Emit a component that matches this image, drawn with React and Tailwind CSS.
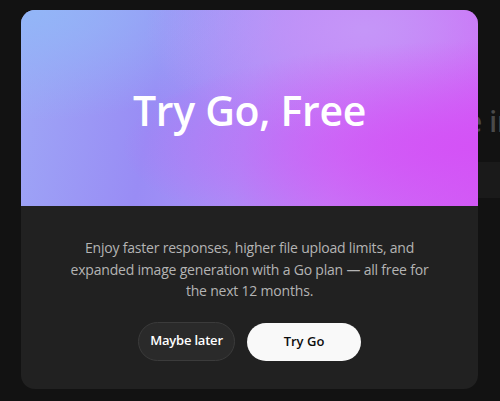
export default function App() {
  return (
    <div className="relative w-[500px] h-[401px] overflow-hidden bg-[#121212] font-['Open_Sans',sans-serif]">
      {/* page behind the dialog */}
      <div className="absolute left-[452px] top-[100px] text-[28px] font-semibold text-[#4a4a4a] whitespace-nowrap">
        ce in
      </div>
      <div className="absolute left-[470px] top-[162px] w-[40px] h-[36px] bg-[#1a1a1a]" />

      {/* dialog */}
      <div className="absolute left-[21px] top-[10px] w-[457px] h-[379px] rounded-[14px] overflow-hidden bg-[#212121] flex flex-col">
        <div className="h-[196px] shrink-0 flex items-center justify-center bg-[radial-gradient(ellipse_at_100%_70%,#d452f6_0%,rgba(212,82,246,0)_55%),radial-gradient(ellipse_at_75%_10%,#c596f8_0%,rgba(197,150,248,0)_45%),radial-gradient(ellipse_at_0%_0%,#92b6f7_0%,rgba(146,182,247,0)_40%),linear-gradient(100deg,#9ea8f6_0%,#998cf5_30%,#aa90f7_50%,#c47ef7_70%,#d25df6_100%)]">
          <h1 className="text-[41px] font-semibold text-white tracking-[-0.3px] leading-none pt-[4px]">
            Try Go, Free
          </h1>
        </div>
        <div className="flex-1 flex flex-col items-center pt-[31px]">
          <p className="w-[380px] text-center text-[14px] tracking-[-0.2px] leading-[21.5px] text-[#b4b4b4]">
            Enjoy faster responses, higher file upload limits, and expanded image generation with a Go plan — all free for the next 12 months.
          </p>
          <div className="flex gap-[12px] mt-[20px]">
            <button className="w-[97px] h-[39px] rounded-full bg-[#2a2a2a] border border-[#3b3b3b] text-white text-[13px] font-semibold tracking-[-0.2px]">
              Maybe later
            </button>
            <button className="w-[114px] h-[38px] mt-[1px] rounded-full bg-[#f9f9f9] text-[#0d0d0d] text-[13px] font-semibold">
              Try Go
            </button>
          </div>
        </div>
      </div>
    </div>
  );
}
